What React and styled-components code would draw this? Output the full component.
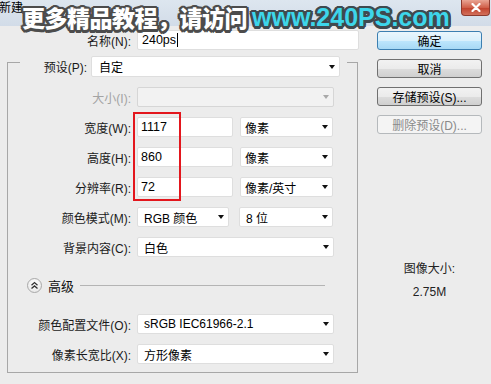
import React from "react";
import styled, { createGlobalStyle } from "styled-components";

const Global = createGlobalStyle`
  html, body { margin: 0; padding: 0; background: #ececec; }
  * { box-sizing: border-box; }
`;

const UI_FONT = `"Liberation Sans", "Noto Sans CJK SC", sans-serif`;

const Window = styled.div`
  position: relative;
  width: 491px;
  height: 384px;
  overflow: hidden;
  background: #ececec;
  font-family: ${UI_FONT};
  font-size: 12px;
  color: #111;
`;

const TitleBar = styled.div`
  height: 26px;
  display: flex;
  justify-content: space-between;
  align-items: flex-start;
  background: linear-gradient(#dde6ef, #d2dce8);
`;

const Title = styled.div`
  margin-left: -1px;
  line-height: 16px;
  color: #000;
`;

const CloseBtn = styled.div`
  width: 29px;
  height: 16px;
  margin-right: 1px;
  border: 1px solid #8d3a2e;
  border-top: none;
  border-radius: 0 0 4px 4px;
  background: linear-gradient(#e9a493, #d0604a 50%, #c0402b 51%, #d2705b);
  display: flex;
  align-items: center;
  justify-content: center;
`;

const Body = styled.div`
  display: flex;
`;

const LeftCol = styled.div`
  width: 360px;
`;

const Row = styled.div`
  display: flex;
  align-items: center;
  gap: 6px;
  height: ${(p) => p.$h || 20}px;
  margin-top: ${(p) => p.$mt ?? 10}px;
`;

const Label = styled.div`
  width: ${(p) => p.$w}px;
  text-align: right;
  white-space: nowrap;
  color: ${(p) => (p.$disabled ? "#a3a3a3" : "#1a1a1a")};
`;

const TextBox = styled.div`
  width: ${(p) => p.$w}px;
  height: 100%;
  background: #fff;
  border: 1px solid #dedede;
  border-radius: 2px;
  padding-left: ${(p) => p.$pl ?? 3}px;
  display: flex;
  align-items: center;
  font-size: 12.5px;
  color: #000;
`;

const Cursor = styled.span`
  display: inline-block;
  width: 1px;
  height: 14px;
  background: #000;
  margin-left: 1px;
`;

const Select = styled.div`
  width: ${(p) => p.$w}px;
  height: 100%;
  background: ${(p) => (p.$disabled ? "#f2f2f2" : "#fff")};
  border: 1px solid ${(p) => (p.$disabled ? "#d6d6d6" : "#dedede")};
  border-radius: 2px;
  padding: 0 4px 0 ${(p) => p.$pl ?? 6}px;
  display: flex;
  align-items: center;
  justify-content: space-between;
  white-space: nowrap;
  color: #000;
`;

const Arrow = styled.span`
  width: 0;
  height: 0;
  border-left: 3.5px solid transparent;
  border-right: 3.5px solid transparent;
  border-top: 4px solid ${(p) => (p.$disabled ? "#a9a9a9" : "#111")};
  flex: none;
`;

const Pair = styled.div`
  display: flex;
  height: 100%;
  gap: ${(p) => p.$gap}px;
`;

const GroupBox = styled.div`
  margin: 12px 0 0 7px;
  width: 351px;
  border: 1px solid #a7a7a7;
  padding-bottom: 8px;
`;

const GroupHeader = styled.div`
  margin: -7px 10px 0 12px;
  height: 21px;
  display: flex;
  align-items: center;
  gap: 4px;
  background: #ececec;
`;

const AdvRow = styled.div`
  display: flex;
  align-items: center;
  height: 16px;
  margin-top: 20px;
  padding-left: 19px;
`;

const AdvIcon = styled.div`
  width: 15px;
  height: 15px;
  border-radius: 50%;
  border: 1px solid #a9a9a9;
  background: radial-gradient(circle at 50% 35%, #ffffff, #e3e3e3);
  display: flex;
  align-items: center;
  justify-content: center;
`;

const AdvText = styled.span`
  margin-left: 6px;
  font-size: 13px;
`;

const AdvLine = styled.div`
  flex: 1;
  height: 1px;
  background: #b4b4b4;
  margin: 0 32px 0 6px;
`;

const RightCol = styled.div`
  width: 131px;
  padding: 5px 0 0 17px;
  display: flex;
  flex-direction: column;
`;

const Button = styled.div`
  width: 105px;
  height: 19px;
  margin-bottom: 9px;
  border-radius: 3px;
  display: flex;
  align-items: center;
  justify-content: center;
  white-space: nowrap;
  border: 1px solid
    ${(p) => (p.$primary ? "#3c7fb1" : p.$disabled ? "#b5b9bc" : "#707070")};
  background: ${(p) =>
    p.$primary
      ? "linear-gradient(#eaf6fd, #d9f0fc 50%, #bee6fd 51%, #a7d9f5)"
      : p.$disabled
      ? "#f4f4f4"
      : "linear-gradient(#f2f2f2, #ebebeb 50%, #dddddd 51%, #cfcfcf)"};
  color: ${(p) => (p.$disabled ? "#8a8a8a" : "#000")};
`;

const SizeInfo = styled.div`
  margin-top: 118px;
  width: 105px;
  text-align: center;
  line-height: 16px;
  color: #222;
`;

const SizeValue = styled.div`
  margin-top: 7px;
`;

const Highlight = styled.div`
  position: absolute;
  left: 133px;
  top: 112px;
  width: 48px;
  height: 89px;
  border: 2px solid #e3161d;
  pointer-events: none;
`;

const outline = (c) =>
  [
    [2, 0], [-2, 0], [0, 2], [0, -2],
    [1.5, 1.5], [-1.5, 1.5], [1.5, -1.5], [-1.5, -1.5],
    [2.5, 1], [-2.5, 1], [2.5, -1], [-2.5, -1],
    [1, 2.5], [-1, 2.5], [1, -2.5], [-1, -2.5],
  ]
    .map(([x, y]) => `${x}px ${y}px 0 ${c}`)
    .join(", ");

const Watermark = styled.div`
  position: absolute;
  left: 22px;
  top: 2px;
  display: flex;
  align-items: center;
  gap: 5px;
  pointer-events: none;
  white-space: nowrap;
`;

const WmCn = styled.span`
  font-family: "Noto Sans CJK SC", sans-serif;
  font-weight: 900;
  font-size: 23px;
  line-height: 30px;
  letter-spacing: -0.5px;
  color: #fff;
  text-shadow: ${outline("#4c4c4c")};
`;

const WmUrl = styled.span`
  font-family: "Liberation Sans", Arial, sans-serif;
  font-weight: 700;
  font-size: 25px;
  line-height: 30px;
  color: #3dd6ea;
  text-shadow: ${outline("#3f4a4f")};
`;

function Chevrons() {
  return (
    <svg width="9" height="9" viewBox="0 0 9 9">
      <path d="M1.5 4.2 L4.5 1.5 L7.5 4.2" fill="none" stroke="#333" strokeWidth="1.3" />
      <path d="M1.5 7.6 L4.5 4.9 L7.5 7.6" fill="none" stroke="#333" strokeWidth="1.3" />
    </svg>
  );
}

function CloseX() {
  return (
    <svg width="10" height="9" viewBox="0 0 10 9">
      <path d="M1.5 1 L8.5 8 M8.5 1 L1.5 8" stroke="#fff" strokeWidth="2.2" strokeLinecap="round" />
    </svg>
  );
}

function Drop({ w, children, disabled, pl }) {
  return (
    <Select $w={w} $disabled={disabled} $pl={pl}>
      <span>{children}</span>
      <Arrow $disabled={disabled} />
    </Select>
  );
}

export default function App() {
  return (
    <>
      <Global />
      <Window>
        <TitleBar>
          <Title>新建</Title>
          <CloseBtn>
            <CloseX />
          </CloseBtn>
        </TitleBar>
        <Body>
          <LeftCol>
            <Row $mt={4}>
              <Label $w={131}>名称(N):</Label>
              <TextBox $w={222} $pl={4}>
                240ps
                <Cursor />
              </TextBox>
            </Row>
            <GroupBox>
              <GroupHeader>
                <Label $w={67}>预设(P):</Label>
                <Drop w={249} pl={7}>自定</Drop>
              </GroupHeader>
              <Row>
                <Label $w={123} $disabled>
                  大小(I):
                </Label>
                <Drop w={197} disabled>
                  {""}
                </Drop>
              </Row>
              <Row>
                <Label $w={123}>宽度(W):</Label>
                <Pair $gap={7}>
                  <TextBox $w={96}>1117</TextBox>
                  <Drop w={93} pl={4}>像素</Drop>
                </Pair>
              </Row>
              <Row>
                <Label $w={123}>高度(H):</Label>
                <Pair $gap={7}>
                  <TextBox $w={96}>860</TextBox>
                  <Drop w={93} pl={4}>像素</Drop>
                </Pair>
              </Row>
              <Row>
                <Label $w={123}>分辨率(R):</Label>
                <Pair $gap={7}>
                  <TextBox $w={96}>72</TextBox>
                  <Drop w={93} pl={4}>像素/英寸</Drop>
                </Pair>
              </Row>
              <Row>
                <Label $w={123}>颜色模式(M):</Label>
                <Pair $gap={10}>
                  <Drop w={92}>RGB 颜色</Drop>
                  <Drop w={94}>8 位</Drop>
                </Pair>
              </Row>
              <Row>
                <Label $w={123}>背景内容(C):</Label>
                <Drop w={197}>白色</Drop>
              </Row>
              <AdvRow>
                <AdvIcon>
                  <Chevrons />
                </AdvIcon>
                <AdvText>高级</AdvText>
                <AdvLine />
              </AdvRow>
              <Row $mt={21}>
                <Label $w={123}>颜色配置文件(O):</Label>
                <Drop w={197}>sRGB IEC61966-2.1</Drop>
              </Row>
              <Row>
                <Label $w={123}>像素长宽比(X):</Label>
                <Drop w={197}>方形像素</Drop>
              </Row>
            </GroupBox>
          </LeftCol>
          <RightCol>
            <Button $primary>确定</Button>
            <Button>取消</Button>
            <Button>存储预设(S)...</Button>
            <Button $disabled>删除预设(D)...</Button>
            <SizeInfo>
              图像大小:
              <SizeValue>2.75M</SizeValue>
            </SizeInfo>
          </RightCol>
        </Body>
        <Highlight />
        <Watermark>
          <WmCn>更多精品教程，请访问</WmCn>
          <WmUrl>www.240PS.com</WmUrl>
        </Watermark>
      </Window>
    </>
  );
}
